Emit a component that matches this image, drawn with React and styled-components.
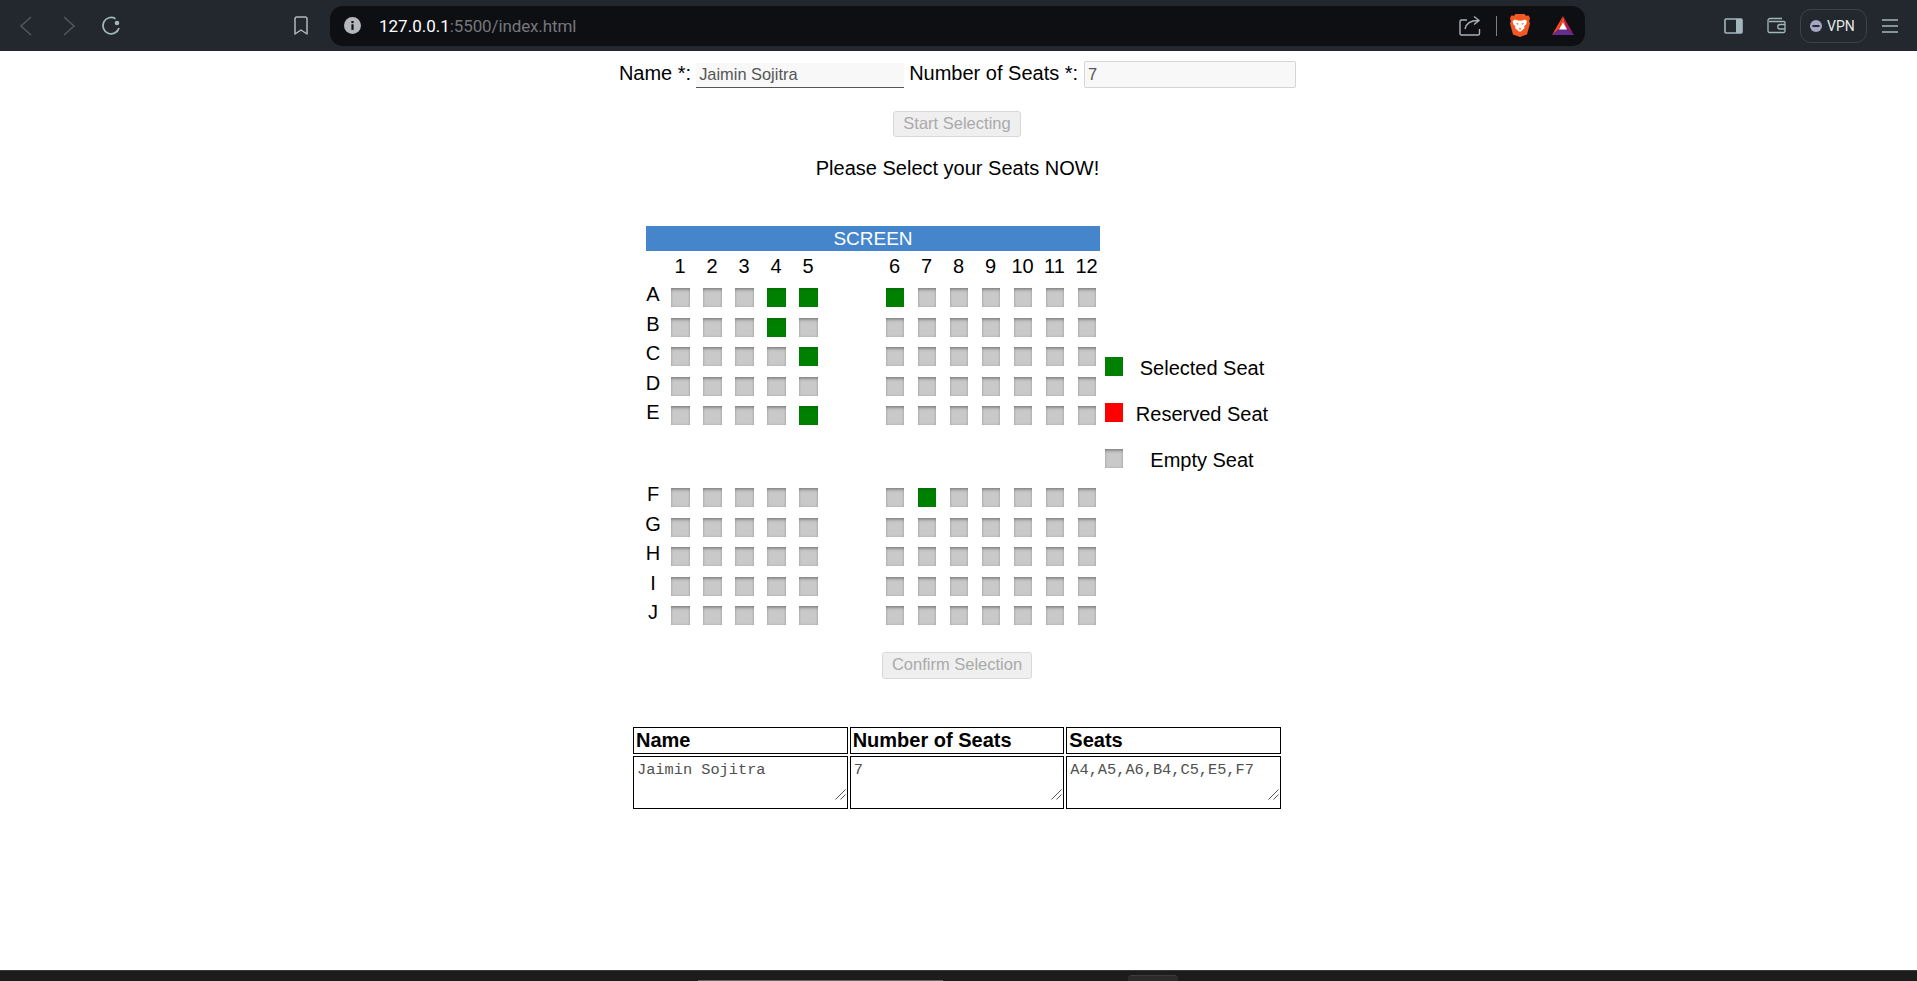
import React from "react";
import styled, { createGlobalStyle } from "styled-components";

const Global = createGlobalStyle`
  html, body { margin: 0; padding: 0; background: #fff; }
  body { font-family: "Liberation Sans", Arial, sans-serif; color: #000; }
`;

const Page = styled.div`
  height: 981px;
  width: 1917px;
  display: flex;
  flex-direction: column;
  overflow: hidden;
`;

/* ---------- browser chrome ---------- */
const Toolbar = styled.header`
  flex: 0 0 51px;
  box-sizing: border-box;
  background: #22282d;
  display: flex;
  align-items: center;
  padding-left: 4px;
`;
const IconSlot = styled.div`
  flex: 0 0 ${(p) => p.$w || 43}px;
  margin-left: ${(p) => p.$ml || 0}px;
  height: 24px;
  display: flex;
  align-items: center;
  justify-content: center;
`;
const AddressBar = styled.div`
  flex: 0 0 1255px;
  margin-left: 19px;
  height: 40px;
  box-sizing: border-box;
  background: #0e0f13;
  border-radius: 13px;
  display: flex;
  align-items: center;
  padding-left: 14px;
`;
const Url = styled.div`
  margin-left: 18px;
  font-family: Roboto, sans-serif;
  font-size: 17px;
  letter-spacing: -0.12px;
  color: #74777c;
  flex: 1;
`;
const Host = styled.span`
  color: #fff;
  letter-spacing: 0;
`;
const Divider = styled.div`
  width: 1px;
  height: 20px;
  background: #7c8084;
  margin: 0 13px 0 15px;
`;
const VpnPill = styled.div`
  margin-left: 14px;
  width: 67px;
  height: 34px;
  box-sizing: border-box;
  border: 1px solid #3c4449;
  border-radius: 11px;
  display: flex;
  align-items: center;
  padding-left: 9px;
  gap: 5px;
  font-family: Roboto, sans-serif;
  font-size: 14px;
  color: #e6e9eb;
`;

/* ---------- page ---------- */
const Main = styled.main`
  flex: 1;
  display: flex;
  flex-direction: column;
  align-items: center;
`;
const FormRow = styled.div`
  display: flex;
  align-items: center;
  padding-top: 10px;
  margin-right: 2px;
  height: 27px;
  font-size: 20px;
`;
const FormLabel = styled.label`
  margin-bottom: 2px;
`;
const NameInput = styled.input`
  width: 208px;
  height: 25px;
  box-sizing: border-box;
  margin: 1px 5px 0 5px;
  border: 0;
  border-bottom: 1px solid #555;
  outline: 0;
  background: #f8f8f8;
  padding: 0 3px;
  font: 16.4px "Liberation Sans", sans-serif;
  color: #555;
`;
const SeatsInput = styled.input`
  width: 212px;
  height: 27px;
  box-sizing: border-box;
  margin-left: 6px;
  border: 1px solid #d5d5d5;
  border-radius: 2px;
  outline: 0;
  background: #f8f8f8;
  padding: 0 3px;
  font: 16.4px "Liberation Sans", sans-serif;
  color: #555;
`;
const ActionButton = styled.button`
  height: ${(p) => p.$h}px;
  width: ${(p) => p.$w}px;
  margin-top: ${(p) => p.$mt}px;
  margin-right: 3px;
  box-sizing: border-box;
  padding: 0 0 2px;
  background: #efefef;
  border: 1px solid #d8d8d8;
  border-radius: 3px;
  font: 16.5px "Liberation Sans", sans-serif;
  color: #aaa;
`;
const Message = styled.p`
  margin: 20px 2px 0 0;
  font-size: 20px;
  line-height: 23px;
`;
const SeatArea = styled.section`
  margin-top: 46px;
  width: 625px;
  display: flex;
`;
const SeatPlan = styled.div`
  flex: 0 0 454px;
  min-width: 0;
`;
const ScreenBar = styled.div`
  height: 25px;
  line-height: 25px;
  background: #4485cc;
  color: #fff;
  text-align: center;
  font-size: 19px;
`;
const SeatRow = styled.div`
  display: flex;
  height: 29.5px;
  margin-bottom: ${(p) => p.$mb || 0}px;
`;
const RowLabel = styled.div`
  flex: 0 0 14px;
  min-width: 0;
  margin-right: 11px;
  display: flex;
  justify-content: center;
  font-size: 20px;
  line-height: 13px;
`;
const Block = styled.div`
  display: flex;
  margin-right: ${(p) => p.$mr || 0}px;
`;
const Seat = styled.div`
  width: ${(p) => p.$w}px;
  height: 19px;
  margin-right: ${(p) => 32 - p.$w}px;
  background: ${(p) => (p.$selected ? "#008000" : "#c9c9c9")};
  box-shadow: ${(p) =>
    p.$selected
      ? "inset 0 2px 2px rgba(0,0,0,.12)"
      : "inset 0 3px 3px -1px rgba(0,0,0,.3), inset 0 0 3px rgba(0,0,0,.15)"};
`;
const NumberRow = styled.div`
  display: flex;
  height: 37px;
  padding-left: 18px;
`;
const ColNumber = styled.div`
  flex: 0 0 32px;
  margin-left: ${(p) => p.$ml || 0}px;
  padding-right: ${(p) => p.$pr || 0}px;
  box-sizing: border-box;
  text-align: center;
  font-size: 20px;
  line-height: 30px;
`;
const Legend = styled.aside`
  margin: 131px 0 0 5px;
  flex: 1;
  min-width: 0;
`;
const LegendRow = styled.div`
  display: flex;
  height: 46px;
`;
const Swatch = styled.div`
  flex: 0 0 18px;
  height: 19px;
  background: ${(p) => p.$color};
  box-shadow: ${(p) =>
    p.$empty ? "inset 0 3px 3px -1px rgba(0,0,0,.3), inset 0 0 3px rgba(0,0,0,.15)" : "none"};
`;
const LegendText = styled.div`
  flex: 1;
  margin-left: 10px;
  text-align: center;
  white-space: nowrap;
  font-size: 20px;
  line-height: 22px;
`;
const SummaryTable = styled.table`
  margin: 46px 3px 0 0;
  border-collapse: separate;
  border-spacing: 2px;
  table-layout: fixed;
  width: 652px;
`;
const HeadCell = styled.th`
  height: 25px;
  padding: 0 2px;
  border: 1px solid #000;
  text-align: left;
  font-size: 20px;
  line-height: 23px;
`;
const DataCell = styled.td`
  height: 51px;
  padding: 0;
  border: 1px solid #000;
  vertical-align: top;
`;
const DataWrap = styled.div`
  position: relative;
  height: 51px;
`;
const DataArea = styled.textarea`
  display: block;
  width: 100%;
  height: 51px;
  box-sizing: border-box;
  margin: 0;
  border: 0;
  outline: 0;
  resize: none;
  padding: 5px 3px 0;
  background: #fff;
  font: 15.3px/17px "Liberation Mono", monospace;
  color: #505050;
`;
const GripIcon = styled.svg`
  position: absolute;
  right: 1px;
  bottom: 8px;
`;

/* ---------- taskbar strip ---------- */
const Taskbar = styled.footer`
  flex: 0 0 11px;
  box-sizing: border-box;
  background: #1c1c1c;
  border-top: 1px solid #3a3a3a;
  display: flex;
  align-items: flex-end;
  padding-left: 698px;
`;
const TaskSearch = styled.div`
  width: 245px;
  height: 1px;
  background: #666;
`;
const TaskTab = styled.div`
  margin-left: 185px;
  width: 50px;
  height: 5px;
  background: #2b2b2b;
  border-top: 1px solid #3d3d3d;
  border-radius: 4px 4px 0 0;
`;

/* ---------- icons ---------- */
const Chevron = ({ dir }) => (
  <svg width="14" height="20" viewBox="0 0 14 20" fill="none" stroke="#50565b" strokeWidth="1.6">
    <path d={dir === "left" ? "M12 1 2 10l10 9" : "M2 1l10 9-10 9"} />
  </svg>
);
const Reload = () => (
  <svg width="22" height="22" viewBox="0 0 22 22" fill="none">
    <path d="M15.5 3.7A8.2 8.2 0 1 0 19 13" stroke="#a4b6bd" strokeWidth="1.8" />
    <circle cx="17" cy="8" r="2.3" fill="#a4b6bd" />
  </svg>
);
const Bookmark = () => (
  <svg width="16" height="20" viewBox="0 0 16 20" fill="none" stroke="#aeb8bd" strokeWidth="1.5">
    <path d="M2 3a2 2 0 0 1 2-2h8a2 2 0 0 1 2 2v15l-6-4-6 4z" strokeLinejoin="round" />
  </svg>
);
const InfoIcon = () => (
  <svg width="17" height="17" viewBox="0 0 17 17">
    <circle cx="8.5" cy="8.5" r="8.5" fill="#b4b7bc" />
    <rect x="7.4" y="7.3" width="2.2" height="5.6" fill="#0e0f13" />
    <rect x="7.4" y="4" width="2.2" height="2.1" fill="#0e0f13" />
  </svg>
);
const Share = () => (
  <svg width="22" height="21" viewBox="0 0 22 21" fill="none" stroke="#aab0b4" strokeWidth="1.4">
    <path d="M8 5H2.5A1.5 1.5 0 0 0 1 6.500V18.500A1.500 1.500 0 0 0 2.500 20H19a1.500 1.500 0 0 0 1.500-1.500V14" />
    <path d="M6 14c1-5 5-8.500 13-8.500M15 1.500l5 4-5 4" />
  </svg>
);
const BraveIcon = () => (
  <svg width="20" height="23" viewBox="0 0 20 23">
    <path d="M5.500 0h9l1.500 1.700 2.600-.3L20 4l-.8 3 .8 2.500-3 11L10 23l-7-2.500-3-11L.8 7 0 4l1.400-2.600 2.600.3z" fill="#f4571f" />
    <path d="M5 5.500l3 1 2 .3 2-.3 3-1 2 1.500-1 3.500-2 2 .5 1.500-3.500 3.500h-2L5 14l.5-1.500-2-2-1-3.500z" fill="#fff" />
    <path d="M6 8.700l2.600 1-.8 1.200zM14 8.700l-2.600 1 .8 1.200zM8.500 14.200h3L10 16z" fill="#f4571f" />
  </svg>
);
const BatIcon = () => (
  <svg width="22" height="19" viewBox="0 0 22 19">
    <polygon points="11,0 0,19 7,13" fill="#ff4724" />
    <polygon points="11,0 22,19 15,13" fill="#9e1f63" />
    <polygon points="0,19 22,19 15,13 7,13" fill="#662d91" />
    <polygon points="11,0 7,13 15,13" fill="#ff4724" />
    <polygon points="11,6.500 7,13.500 15,13.500" fill="#fff" />
  </svg>
);
const SidePanel = () => (
  <svg width="19" height="16" viewBox="0 0 19 16">
    <rect x="1" y="1" width="17" height="14" rx="1" fill="none" stroke="#a4b6bd" strokeWidth="1.600" />
    <rect x="12" y="1" width="6" height="14" fill="#a4b6bd" />
  </svg>
);
const Wallet = () => (
  <svg width="19" height="17" viewBox="0 0 19 17" fill="none" stroke="#a4b6bd" strokeWidth="1.300">
    <path d="M1 3.500A2 2 0 0 1 3 1.500h12M1 3.500V14a1.500 1.500 0 0 0 1.500 1.500h14A1.500 1.500 0 0 0 18 14V5.500a1 1 0 0 0-1-1H2" />
    <path d="M18 7.500h-5a2 2 0 0 0 0 4.500h5" />
  </svg>
);
const VpnDot = () => (
  <svg width="12" height="12" viewBox="0 0 12 12">
    <circle cx="6" cy="6" r="6" fill="#a3a6c4" />
    <rect x="2.500" y="5" width="7" height="2" fill="#22282d" />
  </svg>
);
const Hamburger = () => (
  <svg width="16" height="14" viewBox="0 0 16 14" stroke="#a4b6bd" strokeWidth="1.400">
    <path d="M0 1h16M0 7h16M0 13h16" />
  </svg>
);
const Grip = () => (
  <GripIcon width="11" height="11" viewBox="0 0 11 11" stroke="#555" strokeWidth="1" fill="none">
    <path d="M10.500.5l-10 10M10.500 5.500l-5 5" />
  </GripIcon>
);

/* ---------- data ---------- */
const selected = new Set(["A4", "A5", "A6", "B4", "C5", "E5", "F7"]);
const firstRows = ["A", "B", "C", "D", "E"];
const secondRows = ["F", "G", "H", "I", "J"];

const Row = ({ letter, last }) => (
  <SeatRow $mb={last ? 52.5 : 0}>
    <RowLabel>{letter}</RowLabel>
    <Block $mr={55}>
      {[1, 2, 3, 4, 5].map((n) => (
        <Seat key={n} $w={19} $selected={selected.has(letter + n)} />
      ))}
    </Block>
    <Block>
      {[6, 7, 8, 9, 10, 11, 12].map((n) => (
        <Seat key={n} $w={18} $selected={selected.has(letter + n)} />
      ))}
    </Block>
  </SeatRow>
);

const Cell = ({ value }) => (
  <DataCell>
    <DataWrap>
      <DataArea defaultValue={value} />
      <Grip />
    </DataWrap>
  </DataCell>
);

export default function App() {
  return (
    <Page>
      <Global />
      <Toolbar>
        <IconSlot><Chevron dir="left" /></IconSlot>
        <IconSlot><Chevron dir="right" /></IconSlot>
        <IconSlot $w={41}><Reload /></IconSlot>
        <IconSlot $w={20} $ml={160}><Bookmark /></IconSlot>
        <AddressBar>
          <InfoIcon />
          <Url><Host>127.0.0.1</Host>:5500/index.html</Url>
          <IconSlot $w={22}><Share /></IconSlot>
          <Divider />
          <IconSlot $w={20}><BraveIcon /></IconSlot>
          <IconSlot $w={22} $ml={22}><BatIcon /></IconSlot>
          <IconSlot $w={11} />
        </AddressBar>
        <IconSlot $w={19} $ml={139}><SidePanel /></IconSlot>
        <IconSlot $w={19} $ml={24}><Wallet /></IconSlot>
        <VpnPill><VpnDot />VPN</VpnPill>
        <IconSlot $w={16} $ml={15}><Hamburger /></IconSlot>
      </Toolbar>

      <Main>
        <FormRow>
          <FormLabel>Name *:</FormLabel>
          <NameInput defaultValue="Jaimin Sojitra" disabled />
          <FormLabel>Number of Seats *:</FormLabel>
          <SeatsInput defaultValue="7" disabled />
        </FormRow>
        <ActionButton $w={128} $h={26} $mt={23} disabled>Start Selecting</ActionButton>
        <Message>Please Select your Seats NOW!</Message>

        <SeatArea>
          <SeatPlan>
            <ScreenBar>SCREEN</ScreenBar>
            <NumberRow>
              {[1, 2, 3, 4, 5].map((n) => <ColNumber key={n}>{n}</ColNumber>)}
              {[6, 7, 8, 9, 10, 11, 12].map((n) => (
                <ColNumber key={n} $ml={n === 6 ? 55 : 0} $pr={1}>{n}</ColNumber>
              ))}
            </NumberRow>
            {firstRows.map((l, i) => <Row key={l} letter={l} last={i === 4} />)}
            {secondRows.map((l) => <Row key={l} letter={l} />)}
          </SeatPlan>
          <Legend>
            <LegendRow><Swatch $color="#008000" /><LegendText>Selected Seat</LegendText></LegendRow>
            <LegendRow><Swatch $color="#ff0000" /><LegendText>Reserved Seat</LegendText></LegendRow>
            <LegendRow><Swatch $color="#c9c9c9" $empty /><LegendText>Empty Seat</LegendText></LegendRow>
          </Legend>
        </SeatArea>

        <ActionButton $w={150} $h={27} $mt={16.5} disabled>Confirm Selection</ActionButton>

        <SummaryTable>
          <thead>
            <tr>
              <HeadCell>Name</HeadCell>
              <HeadCell>Number of Seats</HeadCell>
              <HeadCell>Seats</HeadCell>
            </tr>
          </thead>
          <tbody>
            <tr>
              <Cell value="Jaimin Sojitra" />
              <Cell value="7" />
              <Cell value="A4,A5,A6,B4,C5,E5,F7" />
            </tr>
          </tbody>
        </SummaryTable>
      </Main>

      <Taskbar>
        <TaskSearch />
        <TaskTab />
      </Taskbar>
    </Page>
  );
}
